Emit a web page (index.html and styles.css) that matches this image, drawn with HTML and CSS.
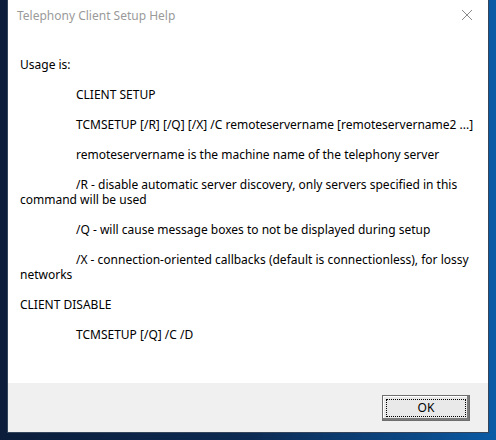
FILE: index.html
```html
<!DOCTYPE html>
<html>
<head>
<meta charset="utf-8">
<link rel="stylesheet" href="styles.css">
</head>
<body>
<div class="window">
  <div class="titlebar">
    <span class="title">Telephony Client Setup Help</span>
    <svg class="close" width="12" height="12" viewBox="0 0 12 12"><path d="M1 1 L11 11 M11 1 L1 11" stroke="#8a8a8a" stroke-width="1" fill="none"/></svg>
  </div>
  <div class="content">
    <p>Usage is:</p>
    <p class="ind">CLIENT SETUP</p>
    <p class="ind">TCMSETUP [/R] [/Q] [/X] /C remoteservername [remoteservername2 ...]</p>
    <p class="ind">remoteservername is the machine name of the telephony server</p>
    <p class="ind">/R - disable automatic server discovery, only servers specified in this command will be used</p>
    <p class="ind">/Q - will cause message boxes to not be displayed during setup</p>
    <p class="ind">/X - connection-oriented callbacks (default is connectionless), for lossy networks</p>
    <p>CLIENT DISABLE</p>
    <p class="ind">TCMSETUP [/Q] /C /D</p>
  </div>
  <div class="footer">
    <button class="ok"><span class="focus">OK</span></button>
  </div>
</div>
</body>
</html>
```

FILE: styles.css
```css
html, body {
  margin: 0;
  padding: 0;
  height: 440px;
  overflow: hidden;
}
body {
  background: linear-gradient(to right, #0b1d3a 0%, #0c2a52 50%, #0b4a88 85%, #0a5ba6 100%);
  font-family: "Noto Sans", "Open Sans", sans-serif;
  font-size: 12px;
  color: #000;
}
.window {
  margin-left: 7px;
  width: 480px;
  height: 432px;
  border: 1px solid #34445a;
  border-top: none;
  background: #fff;
  display: flex;
  flex-direction: column;
}
.titlebar {
  height: 31px;
  display: flex;
  align-items: center;
  justify-content: space-between;
  padding: 0 15px 0 9px;
  box-sizing: border-box;
}
.title {
  color: #9a9a9a;
  font-size: 12px;
  margin-top: 0;
}
.close {
  display: block;
  margin-top: -1px;
}
.content {
  flex: 1;
  padding: 26px 10px 0 12px;
}
.content p {
  margin: 0 0 15px;
  line-height: 15px;
}
.content p.ind {
  text-indent: 56px;
}
.footer {
  height: 49px;
  background: #f0f0f0;
  display: flex;
  justify-content: flex-end;
  align-items: flex-start;
  padding: 12px 18px 0 0;
  box-sizing: border-box;
}
.ok {
  width: 88px;
  height: 26px;
  padding: 3px;
  box-sizing: border-box;
  background: #e9e9e9;
  border: 1px solid #6e6e6e;
  box-shadow: inset -2px -2px 0 #7c7c7c, inset 1px 1px 0 #ffffff;
  font-family: inherit;
  font-size: 12px;
  color: #000;
  display: flex;
}
.focus {
  flex: 1;
  border: 1px dotted #000;
  display: flex;
  align-items: center;
  justify-content: center;
  line-height: 1;
}
```
